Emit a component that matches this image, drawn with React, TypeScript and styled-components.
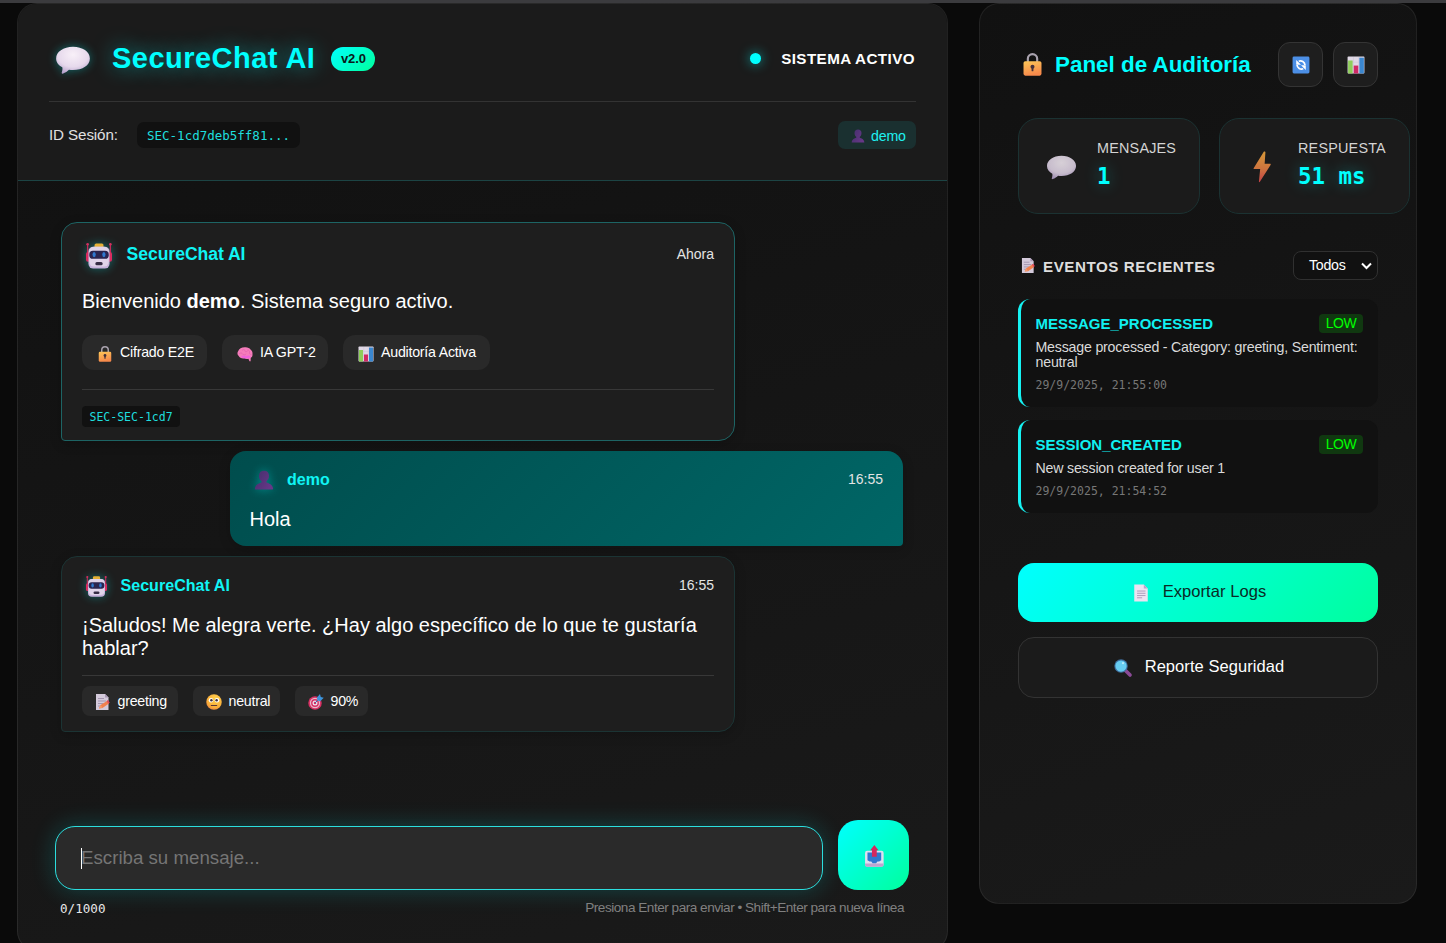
import React from 'react';
import styled, { createGlobalStyle, css } from 'styled-components';

const MONO = "'DejaVu Sans Mono', 'Liberation Mono', monospace";
const CYAN = '#00ffff';

const GlobalStyle = createGlobalStyle`
  * { box-sizing: border-box; }
  body {
    margin: 0;
    background: #0a0a0a;
    color: #fff;
    font-family: 'Liberation Sans', Arial, sans-serif;
    overflow: hidden;
  }
`;

/* ---------- icons ---------- */

type IconProps = { size: number };

const Svg = styled.svg<{ $size: number; $glow?: boolean; $dim?: boolean }>`
  display: block;
  flex: none;
  width: ${p => p.$size}px;
  height: ${p => p.$size}px;
  overflow: visible;
  ${p => p.$glow && css`filter: drop-shadow(0 0 5px rgba(0, 255, 255, 0.35));`}
  opacity: ${p => (p.$dim ? 0.85 : 1)};
`;

const BubbleIcon = ({ size, glow, dim }: IconProps & { glow?: boolean; dim?: boolean }) => (
  <Svg viewBox="0 0 32 32" $size={size} $glow={glow} $dim={dim}>
    <defs>
      <radialGradient id="bubble" cx="0.5" cy="0.3" r="0.75">
        <stop offset="0" stopColor="#f8f0f8" />
        <stop offset="0.6" stopColor="#e6d9ec" />
        <stop offset="1" stopColor="#b09ac8" />
      </radialGradient>
    </defs>
    <path d="M16 5C7.500 5 1 9.500 1 15.500c0 3.500 2.300 6.100 5.500 7.900.4 1.600-.1 3.200-.5 4.600-.2.7.2 1.200.9 1 2.400-.9 4.300-2.200 5.500-3.500 1.200.2 2.300.3 3.600.3 8.500 0 15-4.300 15-10.300S24.500 5 16 5Z" fill="url(#bubble)" />
  </Svg>
);

const RobotIcon = ({ size }: IconProps) => (
  <Svg viewBox="0 0 32 32" $size={size} $glow>
    <path d="M2 1v16M30 1v16" stroke="#c42b59" strokeWidth="1.600" />
    <circle cx="2" cy="1.500" r="1.600" fill="#d0315f" />
    <circle cx="30" cy="1.500" r="1.600" fill="#d0315f" />
    <rect x="0" y="11" width="6" height="12" rx="2.500" fill="#d92c60" />
    <rect x="26" y="11" width="6" height="12" rx="2.500" fill="#d92c60" />
    <rect x="10.500" y="0.500" width="11" height="7" rx="2" fill="#e5b035" />
    <rect x="3" y="4.500" width="26" height="27" rx="6" fill="#c6b3dc" />
    <rect x="4" y="4.500" width="24" height="24.500" rx="6" fill="#dfd3e9" />
    <rect x="4" y="9.500" width="24" height="10" rx="4.500" fill="#2a2550" />
    <ellipse cx="10" cy="14.300" rx="2" ry="3.200" fill="#2f78cf" />
    <ellipse cx="22" cy="14.300" rx="2" ry="3.200" fill="#2f78cf" />
    <rect x="11.500" y="23.500" width="9" height="3.800" rx="1.900" fill="#352c45" />
  </Svg>
);

const LockIcon = ({ size }: IconProps) => (
  <Svg viewBox="0 0 32 32" $size={size}>
    <defs>
      <linearGradient id="lock" x1="0" y1="0" x2="0.3" y2="1">
        <stop offset="0" stopColor="#fdc757" />
        <stop offset="1" stopColor="#f6894b" />
      </linearGradient>
    </defs>
    <path d="M9.500 13V8a6.500 6.500 0 0 1 13 0v5" fill="none" stroke="#a9a2ae" strokeWidth="3" />
    <rect x="3.500" y="11.500" width="25" height="20" rx="2.500" fill="url(#lock)" />
    <circle cx="16" cy="19" r="2.800" fill="#45303a" />
    <rect x="14.700" y="19" width="2.600" height="6.500" rx="1.200" fill="#45303a" />
  </Svg>
);

const BrainIcon = ({ size }: IconProps) => (
  <Svg viewBox="0 0 32 32" $size={size}>
    <path d="M17 2.500c5 0 8 2 10 4.500 3 2 4.500 5.500 4 9 .5 4-1 6.500-3.500 7.500l-.3 6.500c-.2 1.300-2 1.300-2.400 0l-2-4.500c-3 1-5.500.5-7-1C10 25.500 5 24 3.500 20 .5 18 0 13 2.500 10 4 5 10 2 17 2.500Z" fill="#f57cbb" />
    <path d="M11 8c3-2 5 0 5 2s3 2 5 0M5 15c3-2 5-1 6 1s5 3 7 0M22 8c3 1 4 3 3 5s1 4 3 4" fill="none" stroke="#e25fae" strokeWidth="1.400" strokeLinecap="round" />
    <path d="M8 20c5-1 8 0 11 0 3-1.500 6-1 8.500 1-1 3-5 4-8.500 3.500-4 1.500-9 0-11-4.500Z" fill="#f062dc" />
  </Svg>
);

const ChartIcon = ({ size }: IconProps) => (
  <Svg viewBox="0 0 32 32" $size={size}>
    <rect x="1" y="1" width="30" height="30" rx="1.500" fill="#e0d9e6" />
    <path d="M11.500 2v28M20.500 2v28M2 11h28M2 20h28" stroke="#cfc5d6" strokeWidth="1" />
    <rect x="2" y="8" width="8" height="23" fill="#8fce5a" />
    <rect x="12" y="17" width="8" height="14" fill="#d02a66" />
    <rect x="22" y="3" width="8" height="28" fill="#3b87cf" />
  </Svg>
);

const PersonIcon = ({ size, glow }: IconProps & { glow?: boolean }) => (
  <Svg viewBox="0 0 32 32" $size={size} $glow={glow}>
    <defs>
      <linearGradient id="person" x1="0" y1="0" x2="1" y2="0.6">
        <stop offset="0" stopColor="#432f6b" />
        <stop offset="1" stopColor="#663787" />
      </linearGradient>
    </defs>
    <path d="M16 1c-5 0-8 3-8 8 0 4.500 1.500 7 4 8.800V20c-4 1.500-9.500 3-10.500 9.500-.1 1 .3 1.500 1.500 1.500h26c1.200 0 1.600-.5 1.500-1.500-1-6.500-6.500-8-10.500-9.500v-2.200c2.500-1.800 4-4.300 4-8.800C24 4 21 1 16 1Z" fill="url(#person)" />
  </Svg>
);

const MemoIcon = ({ size }: IconProps) => (
  <Svg viewBox="0 0 32 32" $size={size}>
    <path d="M2 0h18l7 7v25H2Z" fill="#d4cadb" />
    <path d="M20 0v7h7Z" fill="#a998b5" />
    <path d="M6 9h12M6 14h16M6 19h11M6 24h7" stroke="#9c8ca8" strokeWidth="1.700" />
    <path d="m8 29 3-7 13-8 4 5-13 9Z" fill="#f0804f" />
    <path d="m23 14 3-2 3.500 5-2.500 2.500Z" fill="#e04759" />
    <path d="m8 29 3-7 4 5Z" fill="#f59a6c" />
  </Svg>
);

const FaceIcon = ({ size }: IconProps) => (
  <Svg viewBox="0 0 32 32" $size={size}>
    <defs>
      <radialGradient id="face" cx="0.6" cy="0.3" r="0.8">
        <stop offset="0" stopColor="#ffd34e" />
        <stop offset="0.7" stopColor="#f9ac39" />
        <stop offset="1" stopColor="#e77948" />
      </radialGradient>
    </defs>
    <circle cx="16" cy="16" r="15.500" fill="url(#face)" />
    <circle cx="10" cy="12.500" r="4.500" fill="#fff" />
    <circle cx="22" cy="12.500" r="4.500" fill="#fff" />
    <circle cx="10.800" cy="12.500" r="2.500" fill="#43303c" />
    <circle cx="21.200" cy="12.500" r="2.500" fill="#43303c" />
    <path d="M10.500 23h11" stroke="#5a3436" strokeWidth="2" strokeLinecap="round" />
  </Svg>
);

const TargetIcon = ({ size }: IconProps) => (
  <Svg viewBox="0 0 32 32" $size={size}>
    <circle cx="14" cy="18" r="13.500" fill="#d93064" />
    <circle cx="14" cy="18" r="10.300" fill="#e8b9cc" />
    <circle cx="14" cy="18" r="7.800" fill="#d93064" />
    <circle cx="14" cy="18" r="5" fill="#efe3ef" />
    <circle cx="14" cy="18" r="2.500" fill="#d93064" />
    <path d="M14 18 24 8" stroke="#3b6eb0" strokeWidth="2" />
    <path d="m18 7 6-7 1.500 6 6 1.500-7 7-6-2Z" fill="#3d94dc" />
  </Svg>
);

const RefreshIcon = ({ size }: IconProps) => (
  <Svg viewBox="0 0 32 32" $size={size}>
    <rect x="1" y="1" width="30" height="30" rx="2.500" fill="#4c8fe6" />
    <path d="M12 9.300c5-1.800 10.500 1 11 6.700M20 22.700c-5 1.800-10.500-1-11-6.700" fill="none" stroke="#fff" strokeWidth="3.200" />
    <path d="M7.500 7v8.500H16ZM24.500 25v-8.500H16Z" fill="#fff" />
  </Svg>
);

const BoltIcon = ({ size }: IconProps) => (
  <Svg viewBox="0 0 32 32" $size={size} $dim>
    <defs>
      <linearGradient id="bolt" x1="0" y1="0" x2="0" y2="1">
        <stop offset="0" stopColor="#f7ae3e" />
        <stop offset="0.550" stopColor="#ee8445" />
        <stop offset="1" stopColor="#e0484f" />
      </linearGradient>
    </defs>
    <path d="M17.300.9 7 17.500c-.5.7-.2 1.200.6 1.200h6L12.300 31.500c-.1.9.5 1 1 .3l11-17.300c.5-.7.2-1.300-.6-1.300h-5.500L19 1.500c.1-1-1.100-1.400-1.700-.6Z" fill="url(#bolt)" />
  </Svg>
);

const PageIcon = ({ size }: IconProps) => (
  <Svg viewBox="0 0 32 32" $size={size}>
    <path d="M4 1h17l7 7v23H4Z" fill="#ece3f2" />
    <path d="M21 1v7h7Z" fill="#bba6cb" />
    <path d="M9 12.500h15M9 16.500h15M9 20.500h15M9 24.500h9" stroke="#a896b6" strokeWidth="1.600" />
  </Svg>
);

const SearchIcon = ({ size }: IconProps) => (
  <Svg viewBox="0 0 32 32" $size={size}>
    <path d="m20 20 8.500 8.500" stroke="#8a4a96" strokeWidth="6.500" strokeLinecap="round" />
    <circle cx="12.500" cy="12.500" r="12" fill="#3f6f9f" />
    <circle cx="12.500" cy="12.500" r="10" fill="#66ccf0" />
    <circle cx="16" cy="7.500" r="2" fill="#b5ecfa" />
  </Svg>
);

const OutboxIcon = ({ size }: IconProps) => (
  <Svg viewBox="0 0 32 32" $size={size}>
    <rect x="3" y="8.500" width="27" height="23" rx="3" fill="#dfdff0" />
    <path d="M3 27h27v2a2.500 2.500 0 0 1-2.500 2.500h-22A2.500 2.500 0 0 1 3 29Z" fill="#bda4cf" />
    <path d="M6.500 11h20v11l-3 2h-2.500l-2 2.500h-5L12 24H9.500l-3-2Z" fill="#2f78cf" />
    <path d="M16.500 0 22.500 7.500H20V17h-7V7.500h-2.500Z" fill="#d5275e" />
  </Svg>
);

/* ---------- page ---------- */

const Page = styled.div`
  display: flex;
  align-items: flex-start;
  gap: 31px;
  width: 1446px;
  height: 943px;
  padding: 0 0 0 17px;
  border-top: 3px solid #3b3b3e;
  background: #0a0a0a;
  overflow: hidden;
`;

const Panel = styled.section`
  flex: none;
  border: 1px solid rgba(255, 255, 255, 0.07);
  border-radius: 20px;
  overflow: hidden;
`;

const ChatPanel = styled(Panel)`
  display: flex;
  flex-direction: column;
  width: 931px;
  height: 948px;
  background: linear-gradient(165deg, #111 10%, #1a1a1a 100%);
`;

const ChatHeader = styled.header`
  height: 177px;
  padding: 0 31px;
  background: #1b1b1b;
  border-bottom: 1px solid #1c4444;
`;

const TopRow = styled.div`
  display: flex;
  align-items: center;
  height: 98px;
  padding: 13px 0 0 6px;
  border-bottom: 1px solid #333;
`;

const Title = styled.h1`
  margin: -2px 16px 0 21px;
  font-size: 29px;
  line-height: 34px;
  letter-spacing: 0.480px;
  color: ${CYAN};
  text-shadow: 0 0 20px rgba(0, 255, 255, 0.5);
`;

const Version = styled.span`
  width: 44px;
  height: 24px;
  border-radius: 12px;
  background: linear-gradient(135deg, #00ffff, #00ff9d);
  color: #0a1a18;
  font-size: 13px;
  font-weight: 700;
  line-height: 23px;
  text-align: center;
  letter-spacing: -0.100px;
`;

const Status = styled.div`
  display: flex;
  align-items: center;
  gap: 20px;
  margin-left: auto;
  padding: 0 1px 1px 0;
  font-size: 15.200px;
  font-weight: 700;
  letter-spacing: 0.420px;
`;

const StatusDot = styled.span`
  width: 11px;
  height: 11px;
  border-radius: 50%;
  background: ${CYAN};
  box-shadow: 0 0 12px rgba(0, 255, 255, 0.6);
`;

const SessionRow = styled.div`
  display: flex;
  align-items: center;
  height: 66px;
  font-size: 15.200px;
  letter-spacing: -0.120px;
  color: #e0e0e0;
`;

const SessionLabel = styled.span`
  width: 69px;
  margin-top: -1px;
  white-space: nowrap;
`;

const Code = styled.code<{ $small?: boolean }>`
  display: inline-block;
  font-family: ${MONO};
  letter-spacing: 0;
  color: #1fdede;
  background: #111;
  ${p => p.$small
    ? css`height: 21px; width: 98px; padding-left: 7.500px; border-radius: 4px; font-size: 11.500px; line-height: 22px;`
    : css`height: 26px; padding: 0 10px; margin-left: 19px; border-radius: 7px; font-size: 12.500px; line-height: 27px;`}
`;

const UserChip = styled.span`
  display: flex;
  align-items: center;
  gap: 6px;
  width: 78px;
  height: 28px;
  margin-left: auto;
  padding: 2px 0 0 13px;
  border-radius: 7px;
  background: #1a3030;
  color: #1ff0f0;
  font-size: 14.200px;
  letter-spacing: -0.200px;
`;

/* ---------- messages ---------- */

const Messages = styled.div`
  display: flex;
  flex-direction: column;
  gap: 10px;
  height: 601px;
  padding: 41px 44px 0 43px;
`;

type Kind = 'welcome' | 'bot' | 'user';

const Bubble = styled.article<{ $kind: Kind; $height: number }>`
  width: 674px;
  height: ${p => p.$height}px;
  padding: ${p => (p.$kind === 'welcome' ? 19 : 15)}px 20px 0;
  border: 1px solid ${p => (p.$kind === 'welcome' ? '#1d6464' : '#1b3434')};
  border-radius: 16px 16px 16px 4px;
  background: #1e1e1e;
  box-shadow: 0 3px 12px rgba(0, 0, 0, 0.2);
  ${p => p.$kind === 'user' && css`
    align-self: flex-end;
    width: 673px;
    padding: 15px 20px 0 19.500px;
    border: 0;
    border-radius: 16px 16px 4px 16px;
    background: linear-gradient(135deg, #004d4d, #006666);
  `}
`;

const BubbleHead = styled.div`
  display: flex;
  align-items: center;
  gap: 14px;
  height: 28px;
  padding-left: 4px;
`;

const Author = styled.strong<{ $large?: boolean }>`
  font-size: ${p => (p.$large ? 17.600 : 16)}px;
  letter-spacing: ${p => (p.$large ? -0.050 : 0.050)}px;
  color: #10f4f4;
  line-height: 20px;
  margin: ${p => (p.$large ? '-5px 0 0 0.5px' : '0 0 0 -0.5px')};
`;

const Time = styled.time<{ $large?: boolean }>`
  margin: ${p => (p.$large ? -5 : -2)}px 0 0 auto;
  font-size: 14px;
  color: #e4e4e4;
`;

const Text = styled.p<{ $top: number }>`
  margin: ${p => p.$top}px 0 0;
  font-size: 20px;
  line-height: 23px;
`;

const Chips = styled.div<{ $top: number }>`
  display: flex;
  gap: 15px;
  margin-top: ${p => p.$top}px;
`;

const Chip = styled.span<{ $width: number; $short?: boolean }>`
  display: flex;
  align-items: center;
  gap: 7px;
  width: ${p => p.$width}px;
  height: ${p => (p.$short ? 30 : 35)}px;
  padding: ${p => (p.$short ? '0 0 0 12.5px' : '0 0 2px 15px')};
  border-radius: ${p => (p.$short ? 8 : 12)}px;
  background: #292929;
  font-size: 14.200px;
  letter-spacing: -0.230px;
  white-space: nowrap;

  svg {
    position: relative;
    top: ${p => (p.$short ? 1 : 2)}px;
  }
`;

const Divider = styled.hr<{ $top: number }>`
  height: 1px;
  margin: ${p => p.$top}px 0 0;
  border: 0;
  background: #383838;
`;

const CodeLine = styled.div`
  display: flex;
  margin-top: 16px;
`;

/* ---------- composer ---------- */

const Composer = styled.footer`
  padding: 38px 38px 0 37px;
`;

const InputRow = styled.div`
  display: flex;
  align-items: flex-end;
  gap: 15px;
`;

const Field = styled.div`
  display: flex;
  align-items: center;
  width: 768px;
  height: 64px;
  padding-left: 25px;
  border: 1px solid #2cdede;
  border-radius: 20px;
  background: #2a2a2a;
  box-shadow: 0 0 24px rgba(0, 255, 255, 0.2);
  color: #757575;
  font-size: 18.700px;
`;

const Caret = styled.span`
  width: 1px;
  height: 21px;
  margin-right: -1px;
  background: #fff;
`;

const SendButton = styled.button`
  display: flex;
  align-items: center;
  justify-content: center;
  width: 71px;
  height: 70px;
  padding: 2px 0 0;
  border: 0;
  border-radius: 20px;
  background: linear-gradient(135deg, #00ffff, #00ff9d);
`;

const MetaRow = styled.div`
  display: flex;
  justify-content: space-between;
  align-items: center;
  height: 35px;
  padding: 0 5px;
  color: #808080;
`;

const Hint = styled.span`
  font-size: 13.600px;
  letter-spacing: -0.490px;
`;

const Counter = styled.span`
  font-family: ${MONO};
  font-size: 12.600px;
  color: #e8e8e8;
  margin-top: 2px;
`;

/* ---------- audit panel ---------- */

const AuditPanel = styled(Panel)`
  width: 438px;
  height: 901px;
  padding: 38px 0 0 38px;
  background: linear-gradient(160deg, #111 0%, #1a1a1a 100%);
`;

const AuditHeader = styled.div`
  display: flex;
  align-items: center;
  width: 360px;
  height: 45px;
  padding-left: 3px;
`;

const AuditTitle = styled.h2`
  flex: 1;
  margin: 0 0 0 11px;
  font-size: 22.400px;
  line-height: 26px;
  color: ${CYAN};
  white-space: nowrap;
`;

const IconButton = styled.button`
  display: flex;
  align-items: center;
  justify-content: center;
  width: 45px;
  height: 45px;
  margin-left: 10px;
  padding: 0;
  border: 1px solid #343434;
  border-radius: 12px;
  background: #1e1e1e;
`;

const Stats = styled.div`
  display: flex;
  gap: 19px;
  margin-top: 31px;
`;

const StatCard = styled.div<{ $width: number }>`
  display: flex;
  flex: none;
  align-items: center;
  width: ${p => p.$width}px;
  height: 96px;
  padding-left: 27px;
  border: 1px solid #1b3232;
  border-radius: 20px;
  background: #1b1b1b;
`;

const StatText = styled.div`
  margin: -3px 0 0 20px;
`;

const StatLabel = styled.div`
  font-size: 14.400px;
  line-height: 18px;
  letter-spacing: 0.200px;
  color: #d4d4d4;
`;

const StatValue = styled.div`
  margin-top: 4px;
  font: 700 22.400px/30px ${MONO};
  color: ${CYAN};
  text-shadow: 0 0 15px rgba(0, 255, 255, 0.35);
`;

const EventsHeader = styled.div`
  display: flex;
  align-items: center;
  width: 360px;
  height: 29px;
  margin-top: 37px;
  padding-left: 3px;
`;

const EventsTitle = styled.h3`
  flex: 1;
  margin: 2px 0 0 7px;
  font-size: 15.200px;
  letter-spacing: 0.530px;
  color: #dedede;
`;

const Filter = styled.div`
  display: flex;
  align-items: center;
  justify-content: space-between;
  width: 85px;
  height: 29px;
  padding: 0 4px 2px 15px;
  border: 1px solid #303030;
  border-radius: 8px;
  background: #111;
  font-size: 14.200px;
  letter-spacing: -0.250px;

  svg { margin-top: 2px; }
`;

const Events = styled.div`
  display: flex;
  flex-direction: column;
  gap: 13px;
  width: 360px;
  margin-top: 19px;
`;

const EventCard = styled.div<{ $height: number }>`
  height: ${p => p.$height}px;
  padding: 14px 15px 0 14.500px;
  border-left: 3px solid #16f2f2;
  border-radius: 12px;
  background: #111;
`;

const EventTop = styled.div`
  display: flex;
  align-items: center;
  justify-content: space-between;
  height: 22px;
`;

const EventName = styled.strong`
  font-size: 15px;
  line-height: 18px;
  color: #10f0f0;
`;

const Level = styled.span`
  width: 44px;
  height: 19px;
  margin-top: -2px;
  border-radius: 4px;
  background: #103810;
  color: #00ff00;
  font-size: 14px;
  line-height: 19px;
  letter-spacing: -0.500px;
  text-align: center;
`;

const EventText = styled.div`
  margin-top: 5px;
  font-size: 14.200px;
  letter-spacing: -0.200px;
  line-height: 15px;
  color: #dadada;
`;

const EventTime = styled.div`
  margin-top: 8px;
  font: 11.500px/15px ${MONO};
  color: #777;
`;

const Action = styled.button<{ $primary?: boolean }>`
  display: flex;
  align-items: center;
  justify-content: center;
  gap: 13px;
  width: 360px;
  height: ${p => (p.$primary ? 59 : 61)}px;
  margin-top: ${p => (p.$primary ? 50 : 15)}px;
  padding: 0 0 2px 2px;
  border: ${p => (p.$primary ? '0' : '1px solid #333')};
  border-radius: 16px;
  background: ${p => (p.$primary ? 'linear-gradient(135deg, #00ffff, #00ff9d)' : '#1b1b1b')};
  color: ${p => (p.$primary ? '#0a2a26' : '#fff')};
  font: 16.500px 'Liberation Sans', Arial, sans-serif;
  letter-spacing: 0.070px;

  svg { position: relative; top: 1px; }
`;

export default function App() {
  return (
    <>
      <GlobalStyle />
      <Page>
        <ChatPanel>
          <ChatHeader>
            <TopRow>
              <BubbleIcon size={36} glow />
              <Title>SecureChat AI</Title>
              <Version>v2.0</Version>
              <Status>
                <StatusDot />
                SISTEMA ACTIVO
              </Status>
            </TopRow>
            <SessionRow>
              <SessionLabel>ID Sesión:</SessionLabel>
              <Code>SEC-1cd7deb5ff81...</Code>
              <UserChip>
                <PersonIcon size={14} />
                demo
              </UserChip>
            </SessionRow>
          </ChatHeader>

          <Messages>
            <Bubble $kind="welcome" $height={219}>
              <BubbleHead>
                <RobotIcon size={26} />
                <Author $large>SecureChat AI</Author>
                <Time $large>Ahora</Time>
              </BubbleHead>
              <Text $top={20}>
                Bienvenido <strong>demo</strong>. Sistema seguro activo.
              </Text>
              <Chips $top={22}>
                <Chip $width={125}><LockIcon size={16} />Cifrado E2E</Chip>
                <Chip $width={106}><BrainIcon size={16} />IA GPT-2</Chip>
                <Chip $width={147}><ChartIcon size={16} />Auditoría Activa</Chip>
              </Chips>
              <Divider $top={19} />
              <CodeLine><Code $small>SEC-SEC-1cd7</Code></CodeLine>
            </Bubble>

            <Bubble $kind="user" $height={95}>
              <BubbleHead>
                <PersonIcon size={20} glow />
                <Author>demo</Author>
                <Time>16:55</Time>
              </BubbleHead>
              <Text $top={14}>Hola</Text>
            </Bubble>

            <Bubble $kind="bot" $height={176}>
              <BubbleHead>
                <RobotIcon size={21} />
                <Author>SecureChat AI</Author>
                <Time>16:55</Time>
              </BubbleHead>
              <Text $top={14}>
                ¡Saludos! Me alegra verte. ¿Hay algo específico de lo que te gustaría hablar?
              </Text>
              <Divider $top={15} />
              <Chips $top={10}>
                <Chip $width={96} $short><MemoIcon size={16} />greeting</Chip>
                <Chip $width={87} $short><FaceIcon size={16} />neutral</Chip>
                <Chip $width={73} $short><TargetIcon size={16} />90%</Chip>
              </Chips>
            </Bubble>
          </Messages>

          <Composer>
            <InputRow>
              <Field><Caret />Escriba su mensaje...</Field>
              <SendButton aria-label="Enviar"><OutboxIcon size={22} /></SendButton>
            </InputRow>
            <MetaRow>
              <Counter>0/1000</Counter>
              <Hint>Presiona Enter para enviar • Shift+Enter para nueva línea</Hint>
            </MetaRow>
          </Composer>
        </ChatPanel>

        <AuditPanel>
          <AuditHeader>
            <LockIcon size={23} />
            <AuditTitle>Panel de Auditoría</AuditTitle>
            <IconButton aria-label="Actualizar"><RefreshIcon size={18} /></IconButton>
            <IconButton aria-label="Estadísticas"><ChartIcon size={18} /></IconButton>
          </AuditHeader>

          <Stats>
            <StatCard $width={182}>
              <BubbleIcon size={31} dim />
              <StatText>
                <StatLabel>MENSAJES</StatLabel>
                <StatValue>1</StatValue>
              </StatText>
            </StatCard>
            <StatCard $width={191}>
              <BoltIcon size={31} />
              <StatText>
                <StatLabel>RESPUESTA</StatLabel>
                <StatValue>51 ms</StatValue>
              </StatText>
            </StatCard>
          </Stats>

          <EventsHeader>
            <MemoIcon size={15} />
            <EventsTitle>EVENTOS RECIENTES</EventsTitle>
            <Filter>
              Todos
              <svg width="13" height="10" viewBox="0 0 13 10">
                <path d="m2 2.500 4.500 4.500L11 2.500" fill="none" stroke="#fff" strokeWidth="2" />
              </svg>
            </Filter>
          </EventsHeader>

          <Events>
            <EventCard $height={108}>
              <EventTop>
                <EventName>MESSAGE_PROCESSED</EventName>
                <Level>LOW</Level>
              </EventTop>
              <EventText>Message processed - Category: greeting, Sentiment: neutral</EventText>
              <EventTime>29/9/2025, 21:55:00</EventTime>
            </EventCard>
            <EventCard $height={93}>
              <EventTop>
                <EventName>SESSION_CREATED</EventName>
                <Level>LOW</Level>
              </EventTop>
              <EventText>New session created for user 1</EventText>
              <EventTime>29/9/2025, 21:54:52</EventTime>
            </EventCard>
          </Events>

          <Action $primary><PageIcon size={18} />Exportar Logs</Action>
          <Action><SearchIcon size={18} />Reporte Seguridad</Action>
        </AuditPanel>
      </Page>
    </>
  );
}
